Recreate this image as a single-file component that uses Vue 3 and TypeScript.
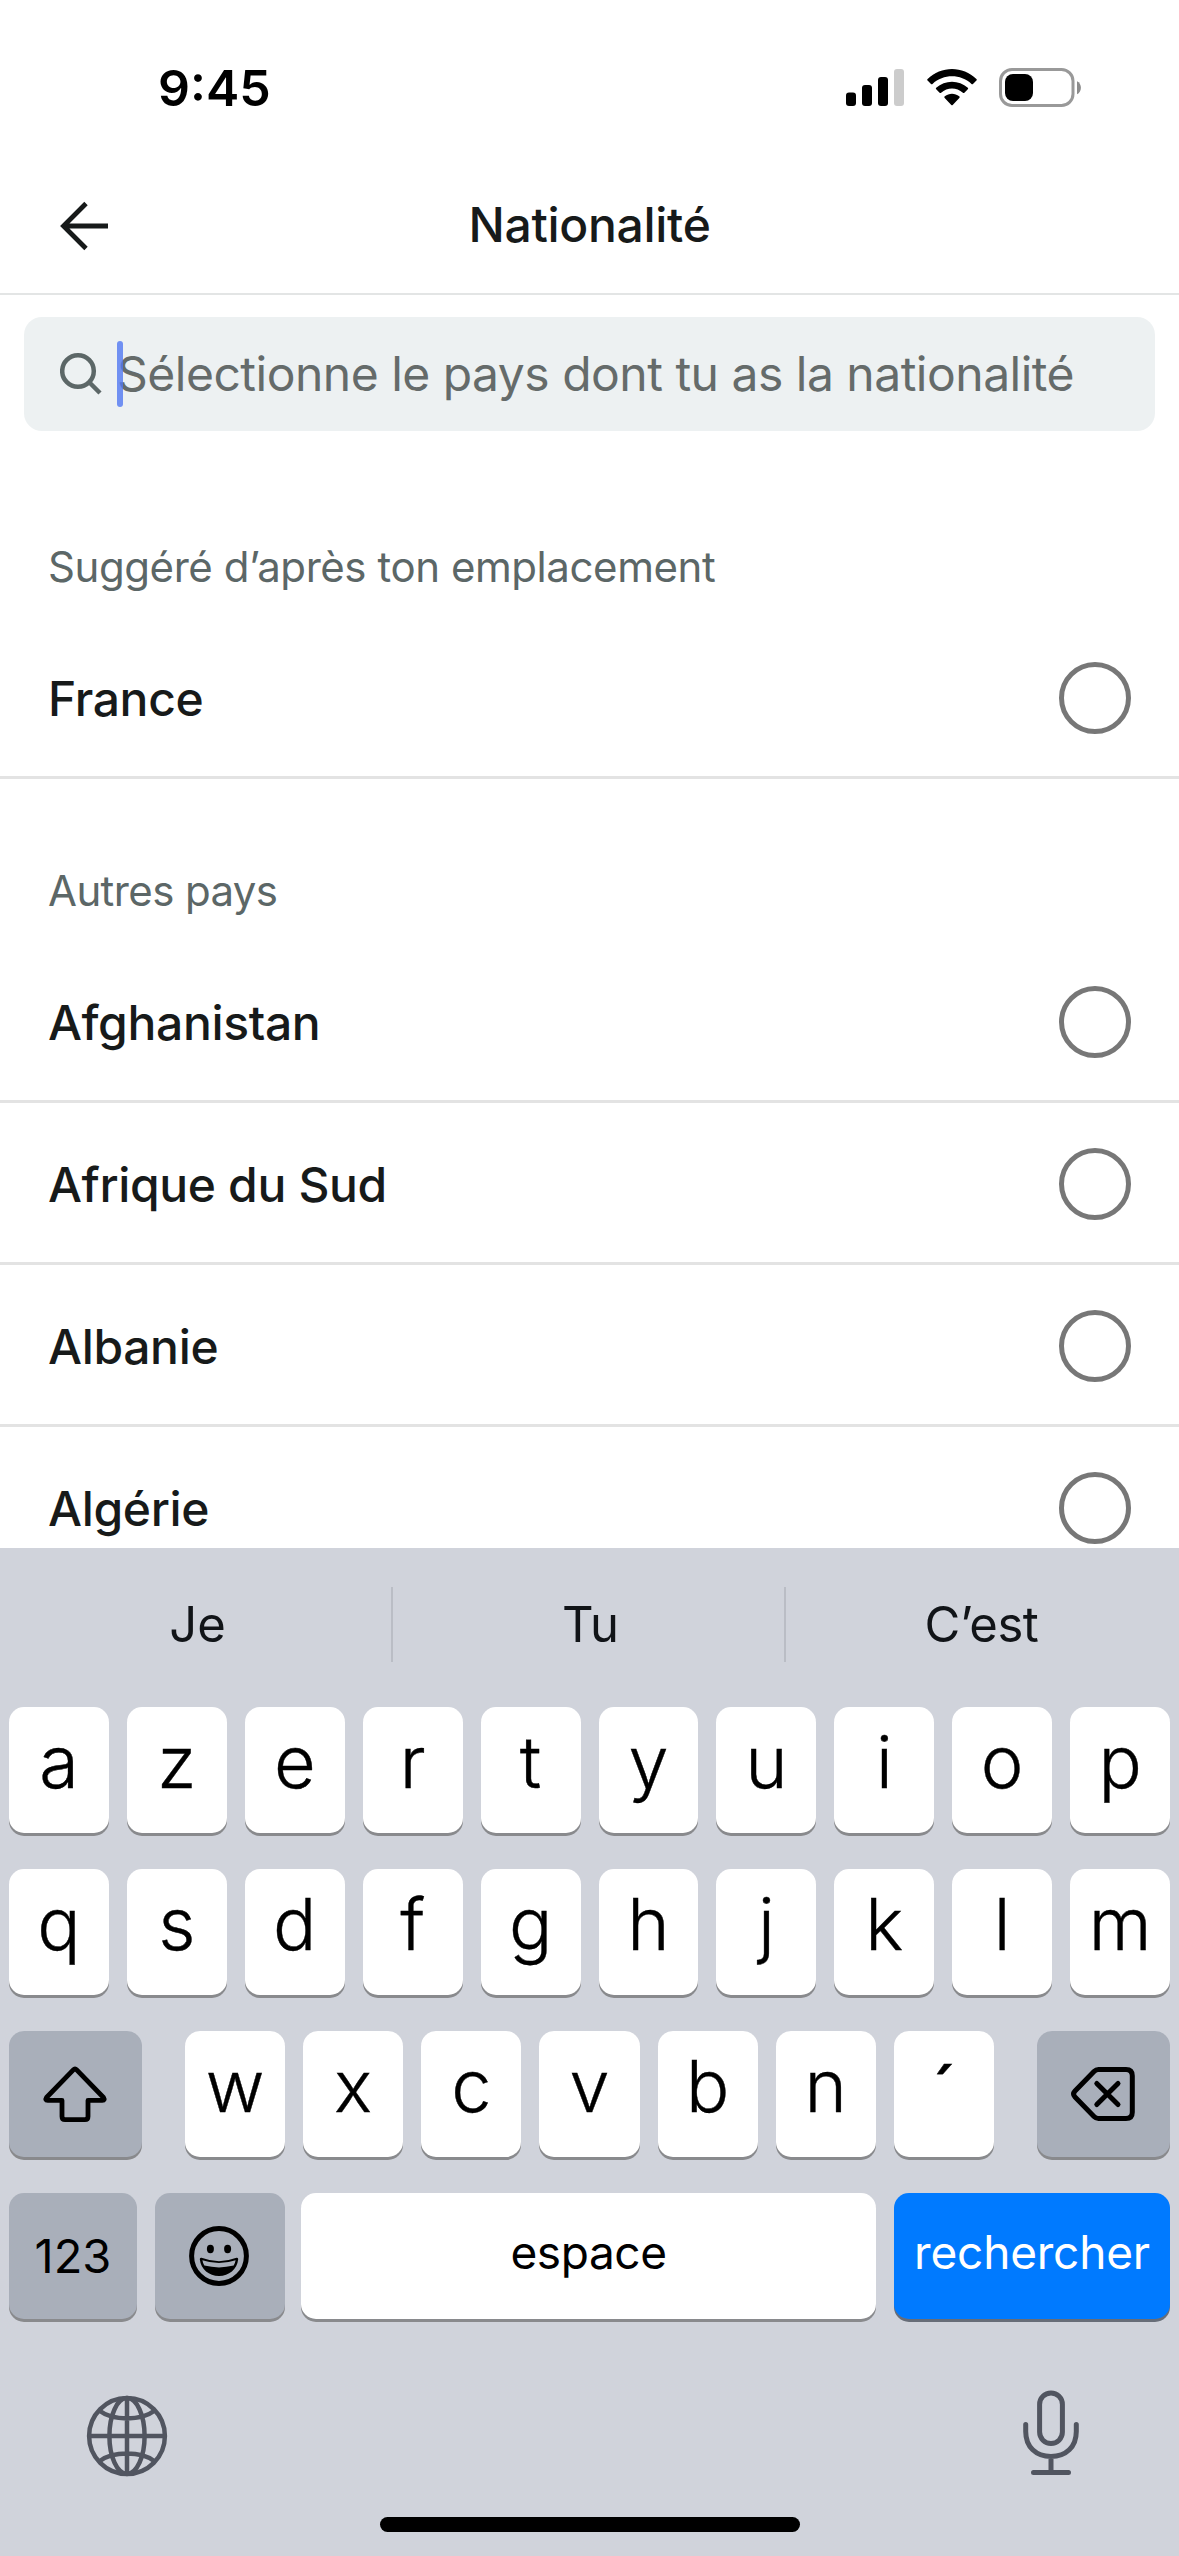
<script setup lang="ts">
const suggested: string[] = ['France']
const others: string[] = ['Afghanistan', 'Afrique du Sud', 'Albanie', 'Algérie']
const predictions: string[] = ['Je', 'Tu', 'C’est']
const topRow: string[] = [...'azertyuiop']
const homeRow: string[] = [...'qsdfghjklm']
const bottomRow: string[] = [...'wxcvbn´']
</script>

<template>
  <div class="screen">
    <main class="content">
      <div class="status">
        <span class="time">9:45</span>
        <div class="indicators">
          <svg class="signal" width="58" height="38" viewBox="0 0 58 38">
            <rect x="0" y="23.500" width="10" height="13.500" rx="3" />
            <rect x="16" y="16" width="10" height="21" rx="3" />
            <rect x="32" y="8" width="10" height="29" rx="3" />
            <rect x="48" y="0" width="10" height="37" rx="3" fill="#cccccc" />
          </svg>
          <svg class="wifi" width="50" height="38" viewBox="0 0 50 38">
            <path d="M.6 11.6a1 1 0 0 1 0-1.5C14 -3.3 36-3.3 49.4 10.1a1 1 0 0 1 0 1.5L46 15a1.100 1.100 0 0 1-1.500 0C33.600 4.800 16.400 4.800 5.500 15A1.100 1.100 0 0 1 4 15z" />
            <path d="M9.200 20.300a1 1 0 0 1 0-1.500C18 10.600 32 10.600 40.800 18.800a1 1 0 0 1 0 1.500L37.400 23.700a1.100 1.100 0 0 1-1.500 0C29.700 18 20.300 18 14.100 23.700A1.100 1.100 0 0 1 12.600 23.700z" />
            <path d="M17.700 28.900a1 1 0 0 1 .1-1.600C22 23.900 28 23.900 32.200 27.300a1 1 0 0 1 .1 1.600L25.700 35.900a1 1 0 0 1-1.400 0z" />
          </svg>
          <svg class="battery" width="83" height="40" viewBox="0 0 83 40">
            <rect x="1.500" y="1.500" width="72.500" height="36" rx="11.500" fill="none" stroke="#999999" stroke-width="3" />
            <rect x="6" y="6" width="28" height="27" rx="8" />
            <path d="M78 13.200c5.200 2.200 5.200 10.800 0 13z" fill="#8c8c8c" />
          </svg>
        </div>
      </div>

      <header class="header">
        <svg class="back" width="50" height="50" viewBox="0 0 50 50" fill="none" stroke="#171a1a" stroke-width="4.800">
          <path d="M48 25H4M26 2.500 3.500 25 26 47.500" />
        </svg>
        <h1>Nationalité</h1>
      </header>

      <div class="search">
        <svg width="44" height="44" viewBox="0 0 44 44" fill="none" stroke="#5c6767" stroke-width="4.500">
          <circle cx="18" cy="19" r="15.800" />
          <path d="M29 30 40 41" />
        </svg>
        <div class="field">
          <span>Sélectionne le pays dont tu as la nationalité</span>
          <i class="caret"></i>
        </div>
      </div>

      <h2 class="first">Suggéré d’après ton emplacement</h2>
      <div v-for="c in suggested" :key="c" class="country">
        <span>{{ c }}</span><i class="radio"></i>
      </div>
      <h2>Autres pays</h2>
      <div v-for="c in others" :key="c" class="country">
        <span>{{ c }}</span><i class="radio"></i>
      </div>
    </main>

    <section class="keyboard">
      <div class="predictions">
        <span v-for="p in predictions" :key="p"><b>{{ p }}</b></span>
      </div>
      <div class="rows">
        <div class="row">
          <div v-for="k in topRow" :key="k" class="key">{{ k }}</div>
        </div>
        <div class="row">
          <div v-for="k in homeRow" :key="k" class="key">{{ k }}</div>
        </div>
        <div class="row spread">
          <div class="key fn shift">
            <svg width="66" height="58" viewBox="0 0 66 58" fill="none" stroke="#000" stroke-width="4.800" stroke-linejoin="round">
              <path d="M31.300 4.800Q33 3 34.700 4.800L61.500 32.500Q63.300 35.400 60.300 35.400H46V51.500Q46 54.600 42.900 54.600H23.100Q20 54.600 20 51.500V35.400H5.700Q2.700 35.400 4.500 32.500Z" />
            </svg>
          </div>
          <div class="letters">
            <div v-for="k in bottomRow" :key="k" class="key">
              <span :class="{ accent: k === '´' }">{{ k }}</span>
            </div>
          </div>
          <div class="key fn shift">
            <svg width="66" height="58" viewBox="0 0 66 58" fill="none" stroke="#000" stroke-width="5" stroke-linecap="round" stroke-linejoin="round">
              <path d="M28.500 4.400H56Q62.300 4.400 62.300 10.700V47.300Q62.300 53.600 56 53.600H28.500Q26 53.600 24 51.600L5 32Q2.200 29 5 26L24 6.400Q26 4.400 28.500 4.400Z" />
              <path d="M26.800 18.500 48 39.500M48 18.500 26.800 39.500" />
            </svg>
          </div>
        </div>
        <div class="row">
          <div class="key fn num">123</div>
          <div class="key fn emoji">
            <svg width="60" height="60" viewBox="0 0 60 60">
              <circle cx="30" cy="30" r="27.400" fill="none" stroke="#000" stroke-width="5" />
              <ellipse cx="21.400" cy="23" rx="3.500" ry="4.200" />
              <ellipse cx="38.600" cy="23" rx="3.500" ry="4.200" />
              <path d="M12.500 31.800Q30 38.500 47.500 31.800Q49.300 31.400 49.200 33.300C48 43.500 40 50 30 50S12 43.500 10.800 33.300Q10.700 31.400 12.500 31.800Z" />
              <path d="M13.400 34.300Q30 39.800 46.600 34.300Q46 37.500 44.700 39.600Q30 43.200 15.300 39.600Q14 37.500 13.400 34.300Z" fill="#a9afba" />
            </svg>
          </div>
          <div class="key word space">espace</div>
          <div class="key word go">rechercher</div>
        </div>
      </div>
      <div class="tools">
        <svg width="84" height="84" viewBox="0 0 84 84" fill="none" stroke="#515560" stroke-width="4.500">
          <circle cx="42" cy="42" r="37.900" />
          <ellipse cx="42" cy="42" rx="17.600" ry="37.900" />
          <path d="M42 4V80M4 42H80M14.500 16.800C28 27 56 27 69.500 16.800M14.500 67.200C28 57 56 57 69.500 67.200" />
        </svg>
        <svg width="60" height="95" viewBox="0 0 60 95" fill="none" stroke="#515560" stroke-width="5" stroke-linecap="round">
          <rect x="18.600" y="5" width="22.800" height="50.500" rx="11.400" />
          <path d="M4.700 36.500V43.500C4.700 59 15 68.500 30 68.500S55.300 59 55.300 43.500V36.500M30 69V84M12.500 84.500H47.500" />
        </svg>
      </div>
      <div class="home"></div>
    </section>
  </div>
</template>

<style>
body {
  margin: 0;
  background: #fff;
}
</style>

<style scoped>
.screen {
  width: 1179px;
  height: 2556px;
  overflow: hidden;
  background: #fff;
  color: #171a1a;
  font-family: Inter, "Liberation Sans", sans-serif;
  display: flex;
  flex-direction: column;
}
svg {
  display: block;
  flex: none;
}
.content {
  height: 1548px;
  flex: none;
  overflow: hidden;
}
.status {
  height: 159px;
  box-sizing: border-box;
  padding: 17px 97px 0 158px;
  display: flex;
  align-items: center;
  justify-content: space-between;
}
.time {
  font-size: 50px;
  font-weight: 600;
  line-height: 60px;
  color: #000;
}
.indicators {
  display: flex;
  align-items: center;
}
.wifi {
  margin-left: 22.500px;
}
.battery {
  margin-left: 22.500px;
}
.header {
  height: 134px;
  border-bottom: 2px solid #e3e5e5;
  display: grid;
  grid-template-columns: 110px 1fr 110px;
  align-items: center;
}
.back {
  margin-left: 60px;
}
h1 {
  margin: 0;
  padding-bottom: 3px;
  text-align: center;
  font-size: 48px;
  line-height: 60px;
  font-weight: 500;
  letter-spacing: -0.3px;
}
.search {
  margin: 22px 24px 0;
  height: 114px;
  box-sizing: border-box;
  padding-left: 36px;
  border-radius: 18px;
  background: #edf1f2;
  display: flex;
  align-items: center;
  gap: 13px;
}
.field {
  position: relative;
  height: 66px;
  font-size: 48px;
  line-height: 65px;
  letter-spacing: -0.5px;
  white-space: nowrap;
  color: #656b6a;
}
.caret {
  position: absolute;
  left: 0;
  top: 0;
  width: 6px;
  height: 66px;
  border-radius: 3px;
  background: rgba(80, 120, 241, 0.8);
}
h2 {
  margin: 0;
  height: 162px;
  box-sizing: border-box;
  padding: 87px 48px 0;
  font-size: 42px;
  line-height: 50px;
  font-weight: 400;
  letter-spacing: -0.6px;
  color: #5c6767;
}
h2.first {
  height: 186px;
  padding-top: 111px;
  letter-spacing: -0.43px;
}
.country {
  height: 162px;
  padding: 0 48px;
  display: flex;
  align-items: center;
  justify-content: space-between;
  font-size: 48px;
  font-weight: 500;
  letter-spacing: -0.35px;
  box-shadow: inset 0 -3px #e3e3e3;
}
.country span {
  padding-top: 2px;
  line-height: 60px;
}
.radio {
  width: 72px;
  height: 72px;
  box-sizing: border-box;
  border: 5px solid #777;
  border-radius: 50%;
}
.keyboard {
  height: 1008px;
  flex: none;
  background: #d0d3db;
  color: #000;
}
.predictions {
  height: 153px;
  margin-bottom: 6px;
  display: grid;
  grid-template-columns: repeat(3, 393px);
  align-items: center;
}
.predictions span {
  height: 75px;
  display: flex;
  align-items: center;
  justify-content: center;
  box-sizing: border-box;
  border-right: 2px solid #babdc5;
  padding-left: 4px;
  font-size: 49px;
  color: #111418;
}
.predictions span:last-child {
  border-right-color: transparent;
  padding-left: 0;
  letter-spacing: -0.4px;
}
.predictions b {
  font-weight: 400;
}
.rows {
  display: flex;
  flex-direction: column;
  gap: 36px;
  padding: 0 9px;
}
.row {
  height: 126px;
  display: flex;
  gap: 18px;
}
.row.spread {
  justify-content: space-between;
  gap: 0;
}
.letters {
  width: 809px;
  display: flex;
  gap: 18px;
}
.key {
  flex: 1 1 0;
  min-width: 0;
  box-sizing: border-box;
  padding-bottom: 16px;
  display: flex;
  align-items: center;
  justify-content: center;
  border-radius: 15px;
  background: #fff;
  box-shadow: 0 3px #898a8d;
  font-size: 72px;
  line-height: 88px;
  font-weight: 300;
  -webkit-text-stroke: 0.4px #000;
}
.accent {
  transform: translateY(7px) scaleX(1.4);
}
.key.fn {
  background: #a9afba;
  padding-bottom: 0;
}
.key.shift {
  flex: none;
  width: 133px;
  padding-right: 2px;
}
.key.num {
  flex: none;
  width: 128px;
  font-size: 47px;
  font-weight: 400;
  -webkit-text-stroke: 0;
}
.key.emoji {
  flex: none;
  width: 130px;
  padding-right: 2px;
}
.key.word {
  padding-bottom: 9px;
  font-size: 46px;
  font-weight: 400;
  letter-spacing: -0.4px;
  -webkit-text-stroke: 0;
}
.key.space {
  margin-left: -2px;
}
.key.go {
  flex: none;
  width: 276px;
  letter-spacing: -0.2px;
  background: #007aff;
  color: #fff;
  box-shadow: 0 3px #676d78;
}
.tools {
  height: 198px;
  box-sizing: border-box;
  padding: 69px 98px 34px 85px;
  display: flex;
  align-items: center;
  justify-content: space-between;
}
.home {
  width: 420px;
  height: 15px;
  margin: 0 auto;
  border-radius: 8px;
  background: #000;
}
</style>
